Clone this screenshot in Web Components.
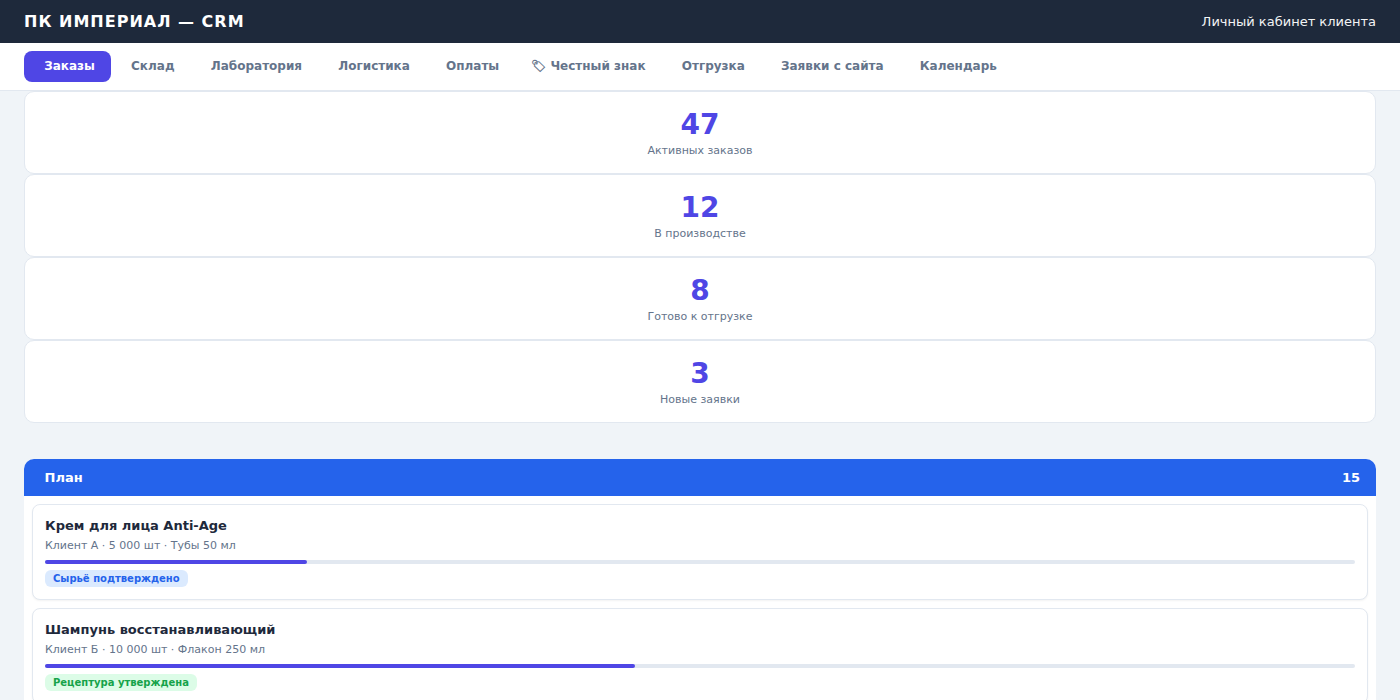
<!DOCTYPE html>
<html lang="ru">
<head>
  <meta charset="UTF-8">
  <title>ПК ИМПЕРИАЛ — CRM</title>
  <style>
    :root {
      --crm-accent: #4f46e5;
      --crm-dark: #1e293b;
      --crm-muted: #64748b;
      --crm-line: #e2e8f0;
    }

    body {
      margin: 0;
      height: 700px;
      overflow: hidden;
      background: #f0f4f8;
      color: var(--crm-dark);
      font-family: "DejaVu Sans", sans-serif;
    }
  </style>
</head>
<body>
  <crm-header>
    ПК ИМПЕРИАЛ — CRM
    <span slot="account">Личный кабинет клиента</span>
  </crm-header>
  <crm-nav>
    <crm-tab active>&nbsp;Заказы</crm-tab>
    <crm-tab>&nbsp;Склад</crm-tab>
    <crm-tab>&nbsp;Лаборатория</crm-tab>
    <crm-tab>&nbsp;Логистика</crm-tab>
    <crm-tab>&nbsp;Оплаты</crm-tab>
    <crm-tab>&#x1F3F7; Честный знак</crm-tab>
    <crm-tab>&nbsp;Отгрузка</crm-tab>
    <crm-tab>&nbsp;Заявки с сайта</crm-tab>
    <crm-tab>&nbsp;Календарь</crm-tab>
  </crm-nav>
  <crm-page>
    <crm-stat slot="stats" value="47">Активных заказов</crm-stat>
    <crm-stat slot="stats" value="12">В производстве</crm-stat>
    <crm-stat slot="stats" value="8">Готово к отгрузке</crm-stat>
    <crm-stat slot="stats" value="3">Новые заявки</crm-stat>
    <crm-column count="15">
      <span slot="title">&nbsp;План</span>
      <crm-order progress="20" tone="blue">
        Крем для лица Anti-Age
        <span slot="meta">Клиент А · 5 000 шт · Тубы 50 мл</span>
        <span slot="status">Сырьё подтверждено</span>
      </crm-order>
      <crm-order progress="45" tone="green">
        Шампунь восстанавливающий
        <span slot="meta">Клиент Б · 10 000 шт · Флакон 250 мл</span>
        <span slot="status">Рецептура утверждена</span>
      </crm-order>
    </crm-column>
  </crm-page>

  <script>
    class CrmElement extends HTMLElement {
      constructor() {
        super();
        const shadow = this.attachShadow({mode: 'open'});
        const template = document.createElement('template');
        template.innerHTML = this.render();
        shadow.appendChild(template.content.cloneNode(true));
      }
    }

    class CrmHeader extends CrmElement {
      render() {
        return `
          <style>
            :host {
              display: flex;
              justify-content: space-between;
              align-items: center;
              padding: 12px 24px;
              background: var(--crm-dark);
              color: #fff;
            }

            .logo {
              font-size: 16px;
              font-weight: 700;
              letter-spacing: 1px;
            }

            .account {
              font-size: 13px;
              opacity: 0.95;
            }
          </style>
          <div class="logo"><slot></slot></div>
          <div class="account"><slot name="account"></slot></div>
        `;
      }
    }

    class CrmNav extends CrmElement {
      render() {
        return `
          <style>
            :host {
              display: flex;
              padding: 8px 24px;
              background: #fff;
              border-bottom: 1px solid var(--crm-line);
            }
          </style>
          <slot></slot>
        `;
      }
    }

    class CrmTab extends CrmElement {
      render() {
        return `
          <style>
            :host {
              display: block;
              padding: 8px 16px;
              border-radius: 8px;
              color: var(--crm-muted);
              font-size: 12px;
              line-height: 15px;
              font-weight: 600;
              white-space: nowrap;
              cursor: pointer;
            }

            :host([active]) {
              background: var(--crm-accent);
              color: #fff;
            }
          </style>
          <slot></slot>
        `;
      }
    }

    class CrmPage extends CrmElement {
      render() {
        return `
          <style>
            :host {
              display: block;
              padding: 0 24px;
            }

            .stats {
              margin-bottom: 36px;
            }
          </style>
          <section class="stats"><slot name="stats"></slot></section>
          <slot></slot>
        `;
      }
    }

    class CrmStat extends CrmElement {
      render() {
        return `
          <style>
            :host {
              display: block;
              padding: 16px;
              background: #fff;
              border: 1px solid var(--crm-line);
              border-radius: 10px;
              text-align: center;
            }

            .value {
              color: var(--crm-accent);
              font-size: 28px;
              line-height: 33px;
              font-weight: 700;
            }

            .label {
              margin-top: 3px;
              color: var(--crm-muted);
              font-size: 11px;
              line-height: 13px;
            }
          </style>
          <div class="value">${this.getAttribute('value')}</div>
          <div class="label"><slot></slot></div>
        `;
      }
    }

    class CrmColumn extends CrmElement {
      render() {
        return `
          <style>
            :host {
              display: block;
              background: #fff;
              border-radius: 10px;
              overflow: hidden;
            }

            header {
              display: flex;
              justify-content: space-between;
              padding: 11px 16px;
              background: #2563eb;
              color: #fff;
              font-size: 13px;
              line-height: 15px;
              font-weight: 700;
            }

            .cards {
              display: flex;
              flex-direction: column;
              gap: 8px;
              padding: 8px;
            }
          </style>
          <header>
            <slot name="title"></slot>
            <span>${this.getAttribute('count')}</span>
          </header>
          <div class="cards"><slot></slot></div>
        `;
      }
    }

    class CrmOrder extends CrmElement {
      render() {
        return `
          <style>
            :host {
              display: block;
              padding: 12px;
              background: #fff;
              border: 1px solid var(--crm-line);
              border-radius: 8px;
              box-shadow: 0 1px 2px rgba(0, 0, 0, 0.05);
            }

            .name {
              font-size: 13px;
              line-height: 17px;
              font-weight: 700;
            }

            .meta {
              margin-top: 5px;
              color: var(--crm-muted);
              font-size: 11px;
              line-height: 13px;
            }

            .bar {
              height: 4px;
              margin: 8px 0 6px;
              background: var(--crm-line);
              border-radius: 2px;
            }

            .fill {
              width: ${this.getAttribute('progress')}%;
              height: 100%;
              background: var(--crm-accent);
              border-radius: 2px;
            }

            .status {
              width: fit-content;
              padding: 2px 8px;
              border-radius: 6px;
              font-size: 10px;
              line-height: 13px;
              font-weight: 600;
            }

            :host([tone="blue"]) .status {
              background: #dbeafe;
              color: #2563eb;
            }

            :host([tone="green"]) .status {
              background: #dcfce7;
              color: #16a34a;
            }
          </style>
          <div class="name"><slot></slot></div>
          <div class="meta"><slot name="meta"></slot></div>
          <div class="bar"><div class="fill"></div></div>
          <div class="status"><slot name="status"></slot></div>
        `;
      }
    }

    customElements.define('crm-header', CrmHeader);
    customElements.define('crm-nav', CrmNav);
    customElements.define('crm-tab', CrmTab);
    customElements.define('crm-page', CrmPage);
    customElements.define('crm-stat', CrmStat);
    customElements.define('crm-column', CrmColumn);
    customElements.define('crm-order', CrmOrder);
  </script>
</body>
</html>
